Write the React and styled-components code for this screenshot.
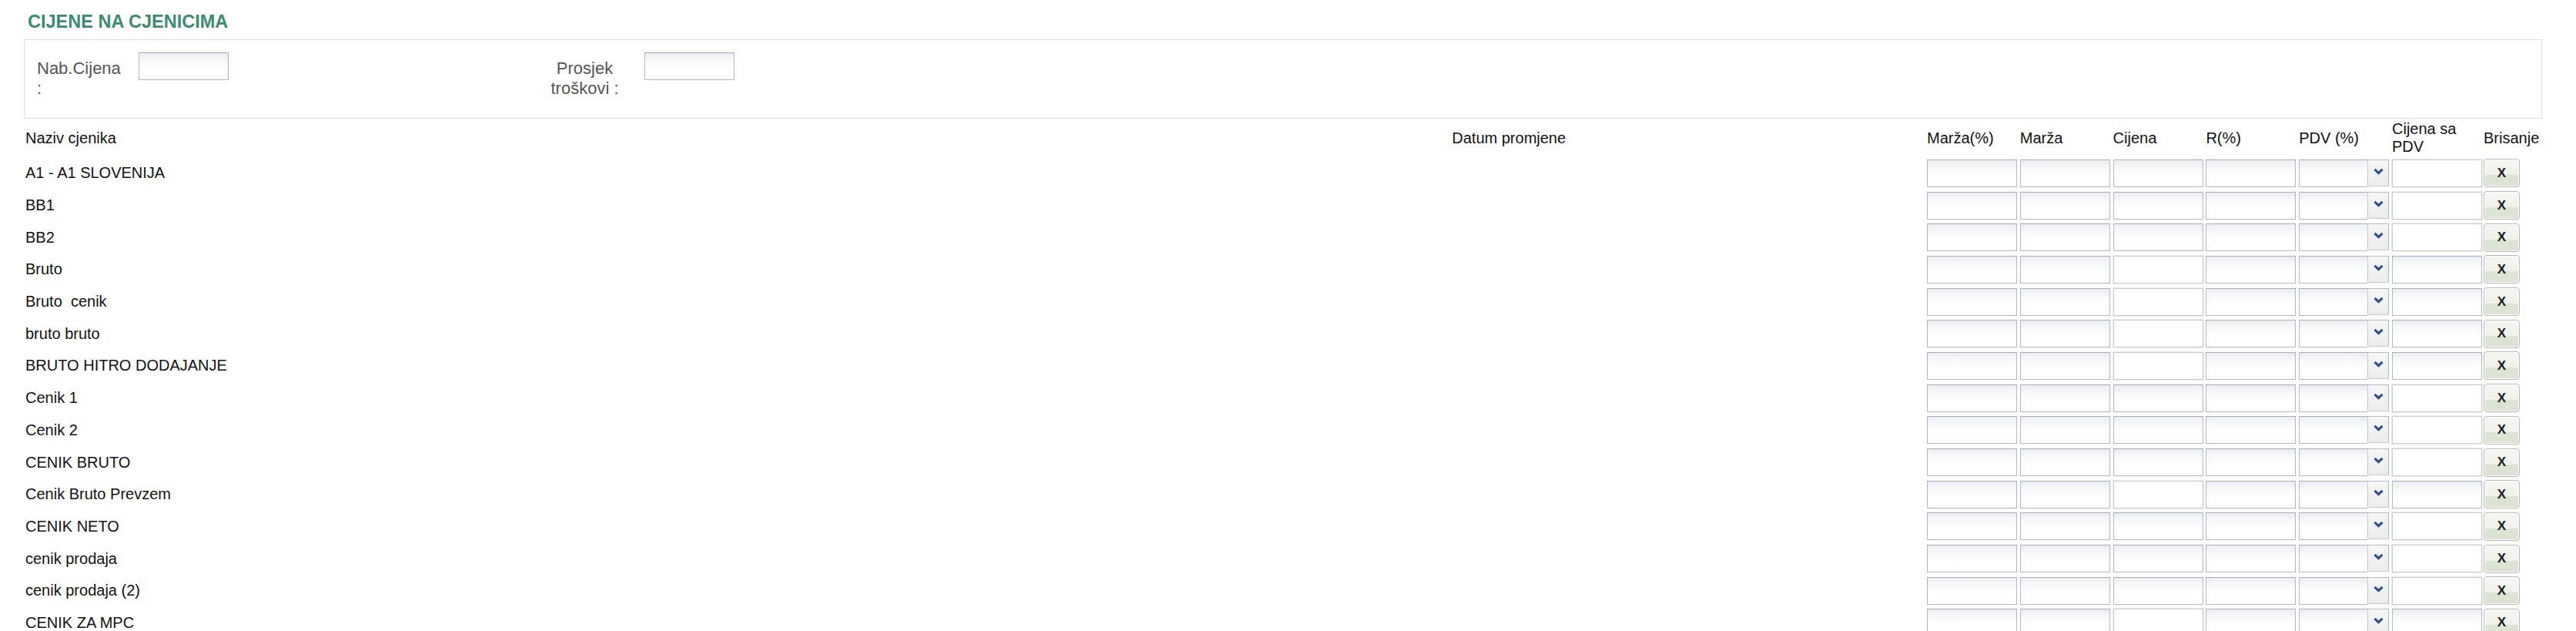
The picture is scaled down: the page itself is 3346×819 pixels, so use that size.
import React from 'react';
import styled, { createGlobalStyle, css } from 'styled-components';

const GlobalStyle = createGlobalStyle`
  html, body {
    margin: 0;
    padding: 0;
    background: #fff;
  }
  body {
    font-family: "Liberation Sans", Arial, sans-serif;
    color: #111;
  }
`;

const Page = styled.div`
  padding: 15px 44px 0 31px;
`;

const Title = styled.h1`
  margin: 0 0 9px;
  padding-left: 5px;
  font-size: 23.5px;
  line-height: 27px;
  font-weight: bold;
  color: #3b8a72;
`;

const FilterBox = styled.div`
  display: flex;
  align-items: flex-start;
  height: 103px;
  box-sizing: border-box;
  padding: 16px 16px 0;
  border: 1px solid #dedede;
`;

const FieldLabel = styled.label`
  box-sizing: border-box;
  width: ${p => p.$width}px;
  margin-left: ${p => p.$offset || 0}px;
  margin-right: ${p => p.$gap}px;
  padding-top: 8px;
  font-size: 22px;
  line-height: 26px;
  color: #555;
  text-align: ${p => p.$align || 'left'};
`;

const fieldLook = css`
  border: 1px solid #b2b6ca;
  border-top-color: #a5a9bf;
  background: linear-gradient(to bottom, #eceef1 0%, #f7f8f9 30%, #fff 60%, #fff 100%);
`;

const plainLook = css`
  border: 1px solid #cbcbcb;
  box-shadow: 0 0 0 1px #ececec;
  background: #fff;
`;

const TextInput = styled.input`
  box-sizing: border-box;
  width: 117px;
  height: 36px;
  margin: 0;
  padding: 2px 4px;
  border-radius: 0;
  font: 20px "Liberation Sans", Arial, sans-serif;
  outline: none;
  ${p => (p.$plain ? plainLook : fieldLook)}
`;

const Table = styled.div`
  margin-left: 2px;
  display: flex;
  flex-direction: column;
  font-size: 20px;
`;

const Row = styled.div`
  display: grid;
  grid-template-columns: 1fr 617px repeat(5, 120.8px) 119px 76px;
  align-items: center;
  height: ${p => (p.$header ? '50px' : '41.7px')};
`;

const HeadCell = styled.div`
  line-height: 23px;
  color: #111;
`;

const NameCell = styled.div`
  white-space: pre;
  line-height: 23px;
  color: #111;
`;

const Cell = styled.div`
  display: flex;
  align-items: center;
`;

const SelectBox = styled.div`
  display: flex;
  align-items: flex-start;
  width: 117px;
  height: 36px;
`;

const SelectField = styled.select`
  appearance: none;
  flex: 1;
  min-width: 0;
  height: 36px;
  box-sizing: border-box;
  margin: 0;
  padding: 0 4px;
  border-radius: 0;
  outline: none;
  font: 20px "Liberation Sans", Arial, sans-serif;
  ${fieldLook}
  border-right: none;
`;

const SelectArrow = styled.span`
  display: flex;
  align-items: center;
  justify-content: center;
  width: 28px;
  height: 35px;
  box-sizing: border-box;
  padding-bottom: 4px;
  border-top: 1px solid #b2b6ca;
  border-left: 1px solid #c4c6d2;
  border-right: 1px solid #8fd3a3;
  border-bottom: 1px solid #c9c9c9;
  background: linear-gradient(to bottom, #f6f6f6, #ececec);
`;

const DeleteButton = styled.button`
  box-sizing: border-box;
  width: 47px;
  height: 37px;
  margin: 0;
  padding: 0;
  border: 1px solid #b8b8b8;
  border-radius: 4px;
  box-shadow: inset 0 0 0 1px #fff;
  background: linear-gradient(
    to bottom,
    #f5f6f2 0%,
    #eff1eb 56%,
    #dee4d4 56%,
    #dde3d3 100%
  );
  font: bold 17px "Liberation Sans", Arial, sans-serif;
  color: #1b1b1b;
  cursor: pointer;
`;

const Chevron = () => (
  <svg width="13" height="9" viewBox="0 0 13 9">
    <path d="M1.5 1.8 L6.5 6.6 L11.5 1.8" fill="none" stroke="#2c4a8c" strokeWidth="3" />
  </svg>
);

const cjenici = [
  'A1 - A1 SLOVENIJA',
  'BB1',
  'BB2',
  'Bruto',
  'Bruto  cenik',
  'bruto bruto',
  'BRUTO HITRO DODAJANJE',
  'Cenik 1',
  'Cenik 2',
  'CENIK BRUTO',
  'Cenik Bruto Prevzem',
  'CENIK NETO',
  'cenik prodaja',
  'cenik prodaja (2)',
  'CENIK ZA MPC',
];

// rows where "Cijena" is read-only looking and "Cijena sa PDV" is editable
const cijenaPlain = new Set([3, 4, 5, 6, 10, 14]);

const PriceRow = ({ name, index }) => {
  const plain = cijenaPlain.has(index);
  return (
    <Row>
      <NameCell>{name}</NameCell>
      <Cell />
      <Cell><TextInput /></Cell>
      <Cell><TextInput /></Cell>
      <Cell><TextInput $plain={plain} /></Cell>
      <Cell><TextInput /></Cell>
      <Cell>
        <SelectBox>
          <SelectField defaultValue="">
            <option value=""></option>
            <option value="22">22</option>
            <option value="9.5">9.5</option>
          </SelectField>
          <SelectArrow><Chevron /></SelectArrow>
        </SelectBox>
      </Cell>
      <Cell><TextInput $plain={!plain} /></Cell>
      <Cell><DeleteButton>X</DeleteButton></Cell>
    </Row>
  );
};

export default function App() {
  return (
    <Page>
      <GlobalStyle />
      <Title>CIJENE NA CJENICIMA</Title>
      <FilterBox>
        <FieldLabel $width={114} $gap={18}>Nab.Cijena :</FieldLabel>
        <TextInput />
        <FieldLabel $width={120} $offset={402.5} $gap={17.5} $align="center">
          Prosjek troškovi :
        </FieldLabel>
        <TextInput />
      </FilterBox>
      <Table>
        <Row $header>
          <HeadCell>Naziv cjenika</HeadCell>
          <HeadCell>Datum promjene</HeadCell>
          <HeadCell>Marža(%)</HeadCell>
          <HeadCell>Marža</HeadCell>
          <HeadCell>Cijena</HeadCell>
          <HeadCell>R(%)</HeadCell>
          <HeadCell>PDV (%)</HeadCell>
          <HeadCell>Cijena sa PDV</HeadCell>
          <HeadCell>Brisanje</HeadCell>
        </Row>
        {cjenici.map((name, i) => (
          <PriceRow key={name} name={name} index={i} />
        ))}
      </Table>
    </Page>
  );
}
